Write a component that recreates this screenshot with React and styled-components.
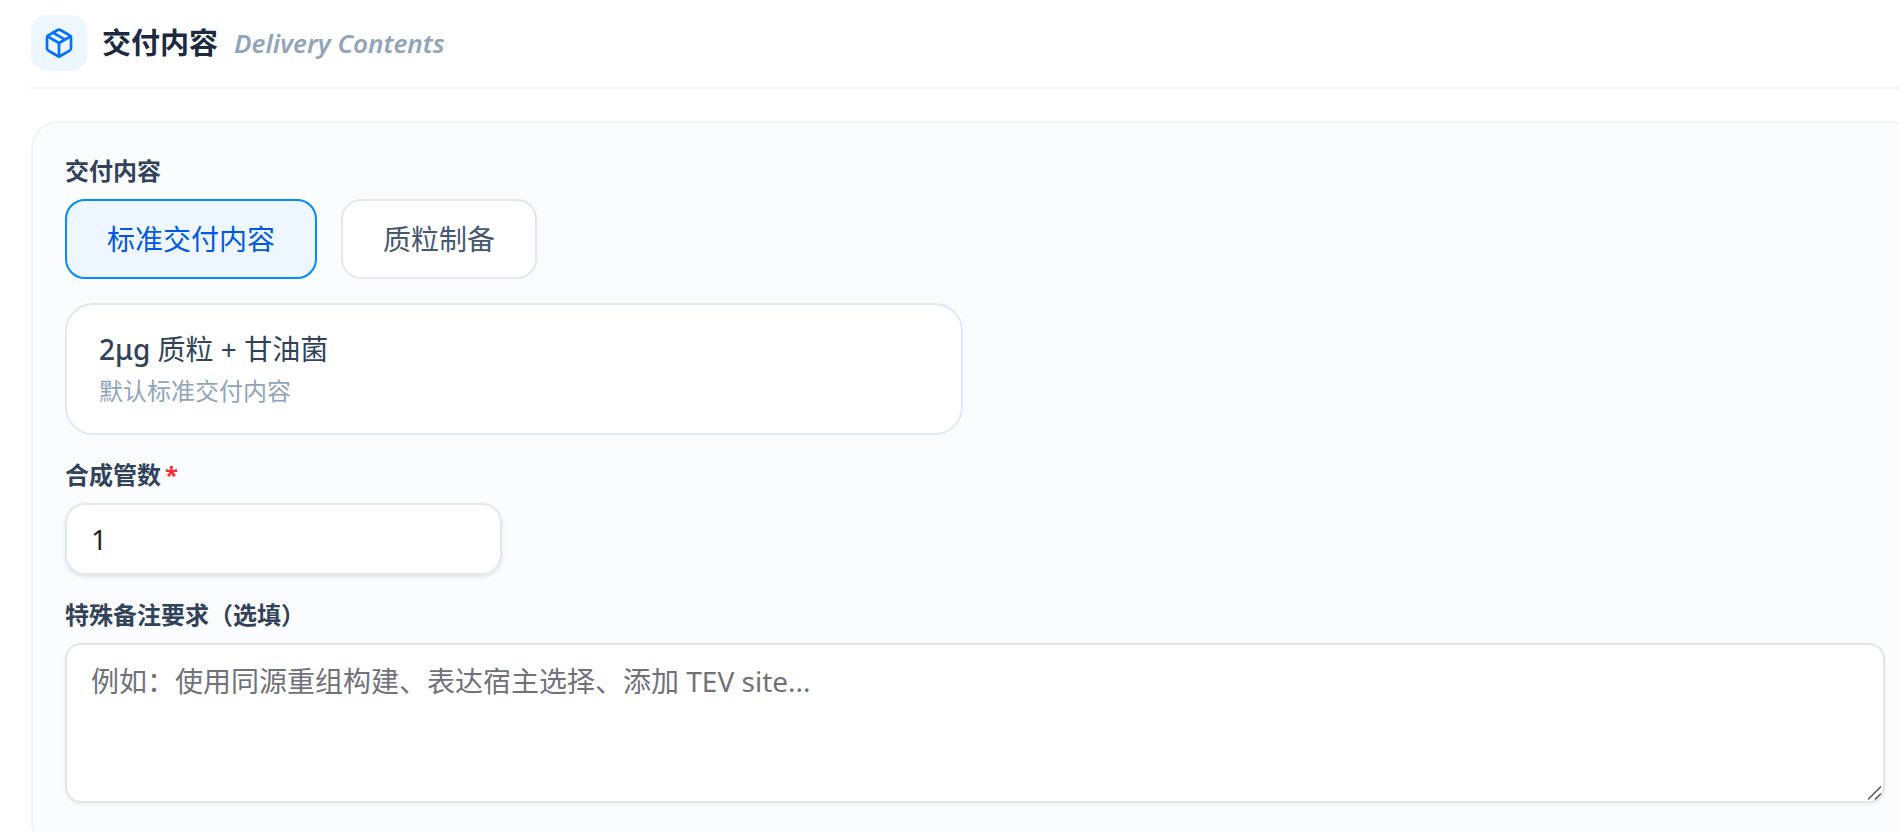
import React, { useState } from 'react'
import styled, { createGlobalStyle } from 'styled-components'
import { Package } from 'lucide-react'

const deliveryOptions = [
    { id: 'standard', label: '标准交付内容' },
    { id: 'plasmid', label: '质粒制备' },
]

function App() {
    const [delivery, setDelivery] = useState('standard')
    const [tubes, setTubes] = useState('1')
    const [remark, setRemark] = useState('')

    return (
        <>
            <GlobalStyle />
            <Section>
                <Header>
                    <IconBox>
                        <Package size={32} strokeWidth={2} />
                    </IconBox>
                    <Title>交付内容</Title>
                    <SubTitle>Delivery Contents</SubTitle>
                </Header>

                <Card>
                    <Field>
                        <Label as='span' id='delivery-label'>交付内容</Label>
                        <Options role='group' aria-labelledby='delivery-label'>
                            {deliveryOptions.map(option => (
                                <OptionBtn
                                    key={option.id}
                                    type='button'
                                    $active={delivery === option.id}
                                    aria-pressed={delivery === option.id}
                                    onClick={() => setDelivery(option.id)}
                                >
                                    {option.label}
                                </OptionBtn>
                            ))}
                        </Options>
                    </Field>

                    <Summary>
                        <SummaryTitle><Amount>2μg</Amount> 质粒 + 甘油菌</SummaryTitle>
                        <SummaryHint>默认标准交付内容</SummaryHint>
                    </Summary>

                    <Field>
                        <Label htmlFor='tubes'>合成管数<Required>*</Required></Label>
                        <NumberInput
                            id='tubes'
                            type='number'
                            min='1'
                            value={tubes}
                            onChange={e => setTubes(e.target.value)}
                        />
                    </Field>

                    <Field>
                        <Label htmlFor='remark'>特殊备注要求（选填）</Label>
                        <Remark
                            id='remark'
                            value={remark}
                            placeholder='例如：使用同源重组构建、表达宿主选择、添加 TEV site...'
                            onChange={e => setRemark(e.target.value)}
                        />
                    </Field>
                </Card>
            </Section>
        </>
    )
}

export default App

const GlobalStyle = createGlobalStyle`
    * {
        box-sizing: border-box;
    }
    body {
        margin: 0;
        overflow: hidden;
        background-color: #ffffff;
        font-family: "Noto Sans", "Noto Sans CJK SC", sans-serif;
    }
    button, input, textarea {
        font-family: inherit;
    }
`
/* runs past the right edge of the window */
const Section = styled.section`
    margin: 0 -20px 0 31px;
    padding-top: 15px;
`
const Header = styled.header`
    display: flex;
    align-items: center;
    padding-bottom: 16px;
    margin-bottom: 32px;
    border-bottom: 2px solid #f0f4f8;
`
const IconBox = styled.div`
    display: flex;
    align-items: center;
    justify-content: center;
    width: 56px;
    height: 56px;
    margin-right: 15px;
    border-radius: 16px;
    background-color: #eef6ff;
    color: #0070ff;
`
const Title = styled.h2`
    margin: 0 16px 0 0;
    color: #1b2a3f;
    font-size: 29px;
    font-weight: 700;
    line-height: 40px;
`
const SubTitle = styled.span`
    color: #90a4bb;
    font-size: 26px;
    font-style: italic;
    font-weight: 600;
    line-height: 40px;
`
const Card = styled.div`
    display: flex;
    flex-direction: column;
    gap: 24px;
    padding: 32px 32px 44px;
    border: 2px solid #f0f4f8;
    border-radius: 28px;
    background-color: #fbfcfe;
`
const Field = styled.div`
    display: flex;
    flex-direction: column;
    align-items: flex-start;
    gap: 12px;
`
const Label = styled.label`
    color: #30435a;
    font-size: 24px;
    font-weight: 700;
    line-height: 32px;
`
const Required = styled.span`
    margin-left: 4px;
    color: #fb2c36;
`
const Options = styled.div`
    display: flex;
    gap: 24px;
`
const OptionBtn = styled.button`
    height: 80px;
    padding: 0 40px;
    border: 2px solid ${props => props.$active ? '#008cff' : '#e0e8f0'};
    border-radius: 20px;
    background-color: ${props => props.$active ? '#eef6ff' : '#ffffff'};
    color: ${props => props.$active ? '#0058e6' : '#45586f'};
    font-size: 28px;
    line-height: 40px;
    cursor: pointer;
`
const Summary = styled.div`
    width: 100%;
    max-width: 898px;
    padding: 24px 32px;
    border: 2px solid #e0e8f0;
    border-radius: 28px;
    background-color: #ffffff;
`
const SummaryTitle = styled.p`
    margin: 0 0 4px;
    color: #30435a;
    font-size: 28px;
    line-height: 40px;
`
const Amount = styled.span`
    font-weight: 500;
`
const SummaryHint = styled.p`
    margin: 0;
    color: #90a4bb;
    font-size: 24px;
    line-height: 36px;
`
const NumberInput = styled.input`
    width: 437px;
    height: 72px;
    padding: 0 24px;
    border: 2px solid #e0e8f0;
    border-radius: 20px;
    background-color: #ffffff;
    box-shadow: 0 2px 4px rgba(0, 0, 0, 0.1);
    color: #1f1f1f;
    font-size: 28px;
`
const grip = encodeURIComponent(
    '<svg xmlns="http://www.w3.org/2000/svg" width="15" height="15"><path d="M0 13.5L13 0.5M7 13.5L13 7.5" stroke="#555555" stroke-width="1.5" fill="none"/></svg>'
)
const Remark = styled.textarea`
    display: block;
    width: 100%;
    height: 160px;
    padding: 16px 24px;
    border: 2px solid #e4e4e7;
    border-radius: 16px;
    background-color: #ffffff;
    box-shadow: 0 2px 4px rgba(0, 0, 0, 0.05);
    color: #1f1f1f;
    font-size: 28px;
    line-height: 40px;
    resize: vertical;

    &::placeholder {
        color: #71717a;
    }
    &::-webkit-resizer {
        background: url("data:image/svg+xml,${grip}") no-repeat;
    }
`
